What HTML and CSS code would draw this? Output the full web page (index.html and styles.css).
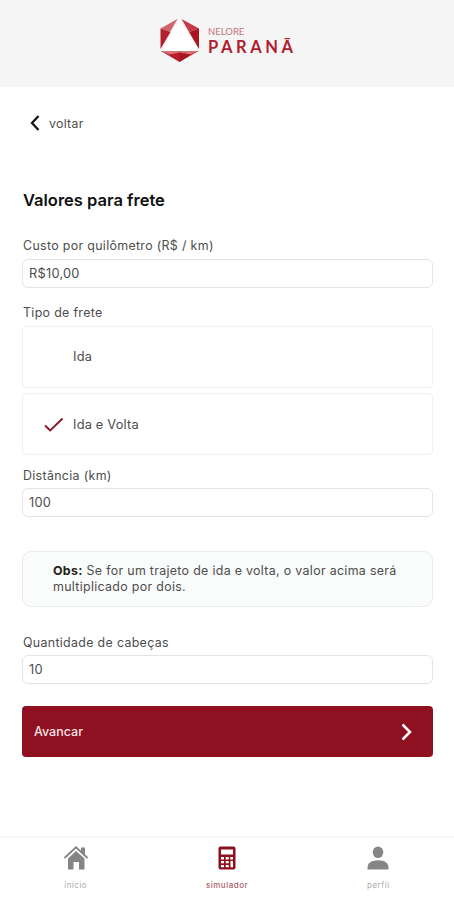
FILE: index.html
```html
<!DOCTYPE html>
<html lang="pt-BR">
<head>
<meta charset="utf-8">
<meta name="viewport" content="width=device-width, initial-scale=1">
<title>Nelore Paraná</title>
<link rel="stylesheet" href="styles.css">
</head>
<body>
<div class="app">
  <header class="header">
    <svg class="logo-mark" width="42" height="46" viewBox="0 0 42 46">
      <path d="M20.500 1 2.500 33h36z" fill="#fff"/>
      <path d="M18.500 1 1.500 10.500 11 14z" fill="#d0646c"/>
      <path d="M1.500 10.500 11.500 14 1.500 31z" fill="#b3202d"/>
      <path d="M22.500 1 40 10.500 30 14z" fill="#c43a45"/>
      <path d="M40 10.500 30 14 40 31z" fill="#a81420"/>
      <path d="M2 33H39.500L20.500 44z" fill="#b81b29"/>
      <path d="M2 33H39.500L31 36.500 20.500 34.500 11 36.500z" fill="#d8717a"/>
      <path d="M20.500 34.500 31 36.500 20.500 44z" fill="#a81420"/>
    </svg>
    <div class="logo-text"><span class="logo-top">NELORE</span><span class="logo-name">PARANÃ</span></div>
  </header>
  <main class="main">
    <a class="back">
      <svg width="12" height="18" viewBox="0 0 12 18"><path d="M9.500 2 3 9l6.500 7" fill="none" stroke="#151515" stroke-width="2.300"/></svg>
      <span>voltar</span>
    </a>
    <h1 class="title">Valores para frete</h1>
    <div class="label label-cost">Custo por quilômetro (R$ / km)</div>
    <div class="field">R$10,00</div>
    <div class="label label-type">Tipo de frete</div>
    <div class="options">
      <div class="option"><span class="option-icon"></span><span>Ida</span></div>
      <div class="option selected">
        <span class="option-icon"><svg width="20" height="16" viewBox="0 0 20 16"><path d="M1 8.500 6.200 13.500 18.500 1.500" fill="none" stroke="#8c1626" stroke-width="1.900"/></svg></span>
        <span>Ida e Volta</span>
      </div>
    </div>
    <div class="label label-distance">Distância (km)</div>
    <div class="field">100</div>
    <p class="note"><b>Obs:</b> <span>Se for um trajeto de ida e volta, o valor acima será<br>multiplicado por dois.</span></p>
    <div class="label label-heads">Quantidade de cabeças</div>
    <div class="field">10</div>
    <div class="submit">
      <span>Avancar</span>
      <svg width="12" height="20" viewBox="0 0 12 20"><path d="M1.500 2.500l7.500 7.500-7.500 7.500" fill="none" stroke="#fff" stroke-width="2.500"/></svg>
    </div>
  </main>
  <nav class="nav">
    <a class="tab">
      <svg width="26" height="26" viewBox="0 0 26 26"><path d="M18 2.500h4v8l-4-4zM5 13.500 13 6l8.500 7.500V24.500H16V17h-5.500v7.500H5z" fill="#858585"/><path d="M1.500 13 13 2.300 24.500 13" fill="none" stroke="#858585" stroke-width="1.800"/></svg>
      <span>início</span>
    </a>
    <a class="tab active">
      <svg width="26" height="26" viewBox="0 0 26 26"><rect x="4.500" y="1.500" width="17" height="23" rx="2" fill="#8b1020"/><path d="M7 4.500h12v5H7zM7 12h3v2.500H7zM11.700 12h3v2.500h-3zM16.200 12H19v2.500h-2.800zM7 16h3v2.300H7zM11.700 16h3v2.300h-3zM7 20h3v2.300H7zM11.700 20h3v2.300h-3zM16.500 16H19v6.300h-2.500z" fill="#fff"/></svg>
      <span>simulador</span>
    </a>
    <a class="tab">
      <svg width="26" height="26" viewBox="0 0 26 26"><ellipse cx="13" cy="7.300" rx="5.300" ry="5.800" fill="#858585"/><path d="M2.500 24.500v-2c0-4.500 4-7.300 10.500-7.300s10.500 2.800 10.500 7.300v2z" fill="#858585"/></svg>
      <span>perfil</span>
    </a>
  </nav>
</div>
</body>
</html>
```
FILE: styles.css
```css
* { box-sizing: border-box; }
body { margin: 0; background: #fff; color: #4c4c4c; font: 13px/16px Inter, "Liberation Sans", sans-serif; }
.app { display: flex; flex-direction: column; height: 900px; overflow: hidden; }
.header { height: 87px; flex: none; background: #f5f5f5; display: flex; padding: 18px 0 0 159px; }
.logo-mark { flex: none; }
.logo-text { display: flex; flex-direction: column; padding: 8px 0 0 7px; font-family: Lato, sans-serif; }
.logo-top { font-size: 9.5px; line-height: 12px; color: #c4727d; }
.logo-name { font-size: 16.5px; line-height: 16px; padding-top: 1px; font-weight: 700; letter-spacing: 3.6px; color: #b01e30; }
.main { flex: 1; display: flex; flex-direction: column; padding: 0 22px; }
.back { display: flex; align-items: center; gap: 8px; height: 20px; margin: 26px 0 0 7px; letter-spacing: 0.3px; font-size: 12.3px; }
.back span { padding-top: 1px; }
.title { margin: 55px 0 0 1px; font-size: 16.5px; line-height: 24px; font-weight: 600; color: #111; }
.label { height: 16px; padding-left: 1px; font-size: 12.4px; line-height: 17px; letter-spacing: 0.33px; white-space: nowrap; }
.label-cost { margin: 25px 0 6px; }
.label-type { margin: 16px 0 6px; }
.label-distance { margin: 12px 0 5px; }
.label-heads { margin: 27px 0 5px; }
.field { height: 29px; border: 1px solid #e4e4e4; border-radius: 6px; padding: 0 6px; line-height: 27px; font-size: 12.8px; letter-spacing: 0.25px; width: 411px; }
.options { display: grid; gap: 5px; width: 411px; }
.option { height: 62px; border: 1px solid #f0f0f0; border-radius: 4px; display: flex; align-items: center; padding-left: 21px; font-size: 12.8px; letter-spacing: 0.2px; }
.selected { padding-top: 2px; }
.option-icon { width: 29px; display: flex; }
.note { width: 411px; height: 56px; margin: 34px 0 0; padding: 11px 0 0 30px; border: 1px solid #e8ebea; border-radius: 9px; background: #fafcfb; font-size: 12.4px; letter-spacing: 0.32px; white-space: nowrap; }
.note b { color: #222; }
.submit { width: 411px; height: 51px; margin-top: 22px; padding: 0 20px 0 12px; display: flex; align-items: center; justify-content: space-between; background: #8f1021; border-radius: 4px; color: #f7e3e5; font-size: 12.5px; font-weight: 500; }
.nav { flex: none; height: 64px; border-top: 2px solid #f7f7f7; display: grid; grid-template-columns: repeat(3, 1fr); }
.tab { display: flex; flex-direction: column; align-items: center; padding-top: 7px; font-size: 8px; line-height: 10px; gap: 9px; color: #aaa; letter-spacing: 0.5px; }
.active { color: #a9616b; font-weight: 500; }
```
